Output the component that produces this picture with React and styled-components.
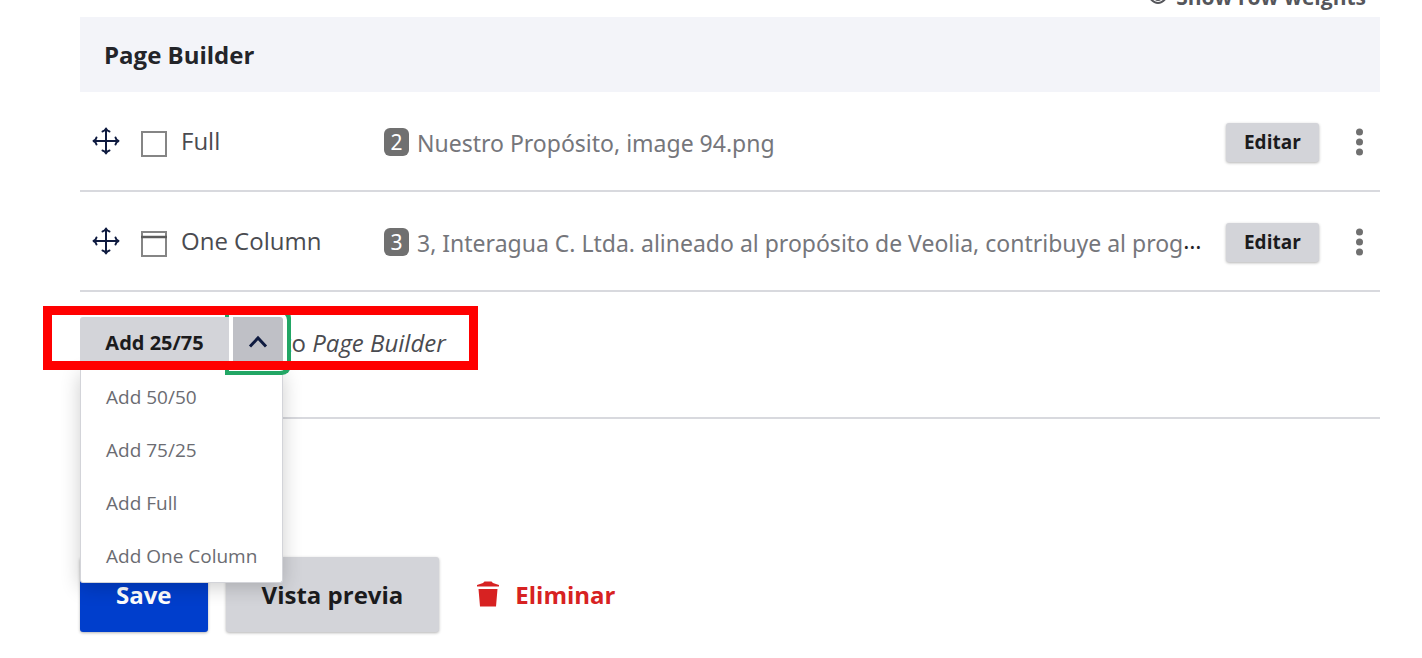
import React from "react";
import styled, { createGlobalStyle } from "styled-components";

const GlobalStyle = createGlobalStyle`
  *, *::before, *::after { box-sizing: border-box; }
  body {
    margin: 0;
    background: #fff;
    color: #232429;
    font-family: "Open Sans", "Noto Sans", sans-serif;
    font-size: 24px;
    line-height: 32px;
  }
  button { font-family: inherit; cursor: pointer; }
`;

const Page = styled.main`
  padding: 0 42px 24px 80px;
  overflow: hidden;
`;

const TopBar = styled.div`
  display: flex;
  justify-content: flex-end;
  align-items: flex-end;
  height: 17px;
  padding: 0 14px 6px 0;
`;

const WeightsButton = styled.button`
  display: flex;
  align-items: center;
  gap: 8px;
  padding: 0;
  border: 0;
  background: none;
  color: #55565b;
  font-size: 21px;
  font-weight: 700;
  line-height: 28px;
`;

const Table = styled.table`
  width: 100%;
  table-layout: fixed;
  border-collapse: separate;
  border-spacing: 0;
`;

const HeaderCell = styled.th`
  height: 75px;
  padding: 0 24px;
  background: #f3f4f9;
  color: #232429;
  font-size: 24px;
  font-weight: 700;
  text-align: left;
`;

const TypeCol = styled.col`
  width: 304px;
`;

const ActionsCol = styled.col`
  width: 154px;
`;

const Cell = styled.td`
  height: 100px;
  padding: 0;
  border-bottom: 2px solid #d8d9de;
  vertical-align: middle;
`;

const TypeGroup = styled.div`
  display: flex;
  align-items: center;
  padding-left: 12px;
  color: #4a4b50;
`;

const DragHandle = styled.button`
  display: flex;
  padding: 0;
  margin-right: 20px;
  border: 0;
  background: none;
`;

const LayoutMark = styled.span`
  display: flex;
  padding-top: 5px;
`;

const TypeName = styled.span`
  margin-left: 13px;
`;

const Summary = styled.div`
  margin-right: 20px;
  overflow: hidden;
  color: #232429;
  font-family: "Noto Sans", "Open Sans", sans-serif;
  font-size: 23px;
  text-overflow: ellipsis;
  white-space: nowrap;
`;

const Badge = styled.span`
  display: inline-block;
  width: 25px;
  margin-right: 8px;
  border-radius: 6px;
  background: #707070;
  color: #fff;
  font-size: 21px;
  line-height: 28px;
  text-align: center;
  vertical-align: middle;
`;

const SummaryText = styled.span`
  color: #75767b;
  vertical-align: middle;
`;

const RowActions = styled.div`
  display: flex;
  justify-content: space-between;
  align-items: center;
  padding: 2px 16px 0 0;
`;

const Button = styled.button`
  display: inline-flex;
  align-items: center;
  justify-content: center;
  height: ${(p) => (p.$small ? "39px" : "75px")};
  padding: ${(p) => (p.$small ? "0 18px" : "0 36px")};
  border: 0;
  border-radius: 3px;
  background: ${(p) => (p.$primary ? "#003ecc" : "#d3d4d9")};
  box-shadow: 0 1px 3px rgba(0, 0, 0, 0.3);
  color: ${(p) => (p.$primary ? "#fff" : "#1b1b1d")};
  font-size: ${(p) => (p.$small ? "19px" : "24px")};
  font-weight: 700;
`;

const MoreButton = styled.button`
  display: flex;
  padding: 0;
  border: 0;
  background: none;
`;

const AddSection = styled.section`
  position: relative;
  display: flex;
  align-items: flex-start;
  height: 127px;
  padding-top: 25px;
  border-bottom: 2px solid #d8d9de;
`;

const SplitButton = styled.div`
  position: relative;
  z-index: 2;
  display: flex;
  gap: 4px;
`;

const AddButton = styled.button`
  position: relative;
  z-index: 2;
  width: 149px;
  height: 50px;
  padding: 0;
  border: 0;
  border-radius: 3px 0 0 3px;
  background: #d3d4d9;
  color: #1b1b1d;
  font-size: 20px;
  font-weight: 700;
`;

const ToggleButton = styled.button`
  position: relative;
  z-index: 1;
  display: flex;
  align-items: center;
  justify-content: center;
  width: 50px;
  height: 50px;
  padding: 0;
  border: 0;
  border-radius: 0 3px 3px 0;
  background: #bfc0c6;
  box-shadow: 0 0 0 4px #fff, 0 0 0 8px #22a665;
`;

const Menu = styled.ul`
  position: absolute;
  top: 100%;
  left: 0;
  width: 203px;
  margin: 3px 0 0;
  padding: 0;
  border: 1px solid #d3d4d9;
  border-top: 0;
  border-radius: 0 0 3px 3px;
  background: #fff;
  box-shadow: 0 4px 20px rgba(0, 0, 0, 0.2);
  list-style: none;
`;

const MenuItem = styled.button`
  display: block;
  width: 100%;
  height: 53px;
  padding: 0 0 0 25px;
  border: 0;
  background: none;
  color: #6b6c72;
  font-size: 19px;
  text-align: left;
  white-space: nowrap;
`;

const AddTarget = styled.span`
  padding-top: 10px;
  color: #4a4b50;
`;

const Highlight = styled.div`
  position: absolute;
  z-index: 3;
  top: 14px;
  left: -37px;
  width: 435px;
  height: 64px;
  border: 9px solid #f00;
  pointer-events: none;
`;

const FormActions = styled.footer`
  display: flex;
  align-items: center;
  gap: 18px;
  padding-top: 138px;
`;

const DeleteLink = styled.a`
  display: inline-flex;
  align-items: center;
  gap: 16px;
  margin-left: 20px;
  color: #d72222;
  font-weight: 700;
  text-decoration: none;
`;

const EyeIcon = () => (
  <svg width="20" height="16" viewBox="0 0 20 16" aria-hidden="true">
    <path d="M1 8Q10-4 19 8Q10 20 1 8Z" fill="none" stroke="#55565b" strokeWidth="2" />
    <circle cx="10" cy="8" r="4" fill="#55565b" />
  </svg>
);

const MoveIcon = () => (
  <svg width="28" height="28" viewBox="0 0 28 28" fill="none" stroke="#0f1b40" strokeWidth="2" strokeLinecap="round" strokeLinejoin="round" aria-hidden="true">
    <path d="M14 2V26M2 14H26M10.500 4.500Q13 4 14 1.500Q15 4 17.500 4.500M10.500 23.500Q13 24 14 26.500Q15 24 17.500 23.500M4.500 10.500Q4 13 1.500 14Q4 15 4.500 17.500M23.500 10.500Q24 13 26.500 14Q24 15 23.500 17.500" />
  </svg>
);

const LayoutIcon = ({ split }) => (
  <svg width="28" height="28" viewBox="0 0 28 28" fill="none" aria-hidden="true">
    <rect x="2" y="2" width="24" height="24" stroke="#858585" strokeWidth="2" />
    {split && <path d="M1 7H27" stroke="#5c5c5c" strokeWidth="2.500" />}
  </svg>
);

const DotsIcon = () => (
  <svg width="9" height="28" viewBox="0 0 9 28" fill="#707070" aria-hidden="true">
    <circle cx="4.500" cy="4" r="3.500" />
    <circle cx="4.500" cy="14" r="3.500" />
    <circle cx="4.500" cy="24" r="3.500" />
  </svg>
);

const ChevronUp = () => (
  <svg width="20" height="14" viewBox="0 0 20 14" fill="none" stroke="#0f1b40" strokeWidth="3" aria-hidden="true">
    <path d="M2 11.500L10 3L18 11.500" />
  </svg>
);

const TrashIcon = () => (
  <svg width="22" height="28" viewBox="0 0 22 28" fill="#d72222" aria-hidden="true">
    <path d="M0 5.500V4L6 2L7.500 0.500H14.500L16 2L22 4V5.500ZM1.500 8H20.500L19 25.500H3Z" />
  </svg>
);

const rows = [
  { name: "Full", count: 2, text: "Nuestro Propósito, image 94.png", split: false },
  {
    name: "One Column",
    count: 3,
    text: "3, Interagua C. Ltda. alineado al propósito de Veolia, contribuye al progreso",
    split: true,
  },
];

const options = ["Add 50/50", "Add 75/25", "Add Full", "Add One Column"];

export default function App() {
  return (
    <>
      <GlobalStyle />
      <Page>
        <TopBar>
          <WeightsButton type="button">
            <EyeIcon />
            Show row weights
          </WeightsButton>
        </TopBar>
        <Table>
          <colgroup>
            <TypeCol />
            <col />
            <ActionsCol />
          </colgroup>
          <thead>
            <tr>
              <HeaderCell colSpan={3}>Page Builder</HeaderCell>
            </tr>
          </thead>
          <tbody>
            {rows.map((row) => (
              <tr key={row.name}>
                <Cell>
                  <TypeGroup>
                    <DragHandle type="button" aria-label="Drag to re-order">
                      <MoveIcon />
                    </DragHandle>
                    <LayoutMark>
                      <LayoutIcon split={row.split} />
                    </LayoutMark>
                    <TypeName>{row.name}</TypeName>
                  </TypeGroup>
                </Cell>
                <Cell>
                  <Summary>
                    <Badge>{row.count}</Badge>
                    <SummaryText>{row.text}</SummaryText>
                  </Summary>
                </Cell>
                <Cell>
                  <RowActions>
                    <Button type="button" $small>Editar</Button>
                    <MoreButton type="button" aria-label="More actions">
                      <DotsIcon />
                    </MoreButton>
                  </RowActions>
                </Cell>
              </tr>
            ))}
          </tbody>
        </Table>
        <AddSection>
          <SplitButton>
            <AddButton type="button">Add 25/75</AddButton>
            <ToggleButton type="button" aria-label="List additional actions" aria-expanded="true">
              <ChevronUp />
            </ToggleButton>
            <Menu>
              {options.map((option) => (
                <li key={option}>
                  <MenuItem type="button">{option}</MenuItem>
                </li>
              ))}
            </Menu>
          </SplitButton>
          <AddTarget>
            to <em>Page Builder</em>
          </AddTarget>
          <Highlight />
        </AddSection>
        <FormActions>
          <Button type="button" $primary>Save</Button>
          <Button type="button">Vista previa</Button>
          <DeleteLink href="#delete">
            <TrashIcon />
            Eliminar
          </DeleteLink>
        </FormActions>
      </Page>
    </>
  );
}
